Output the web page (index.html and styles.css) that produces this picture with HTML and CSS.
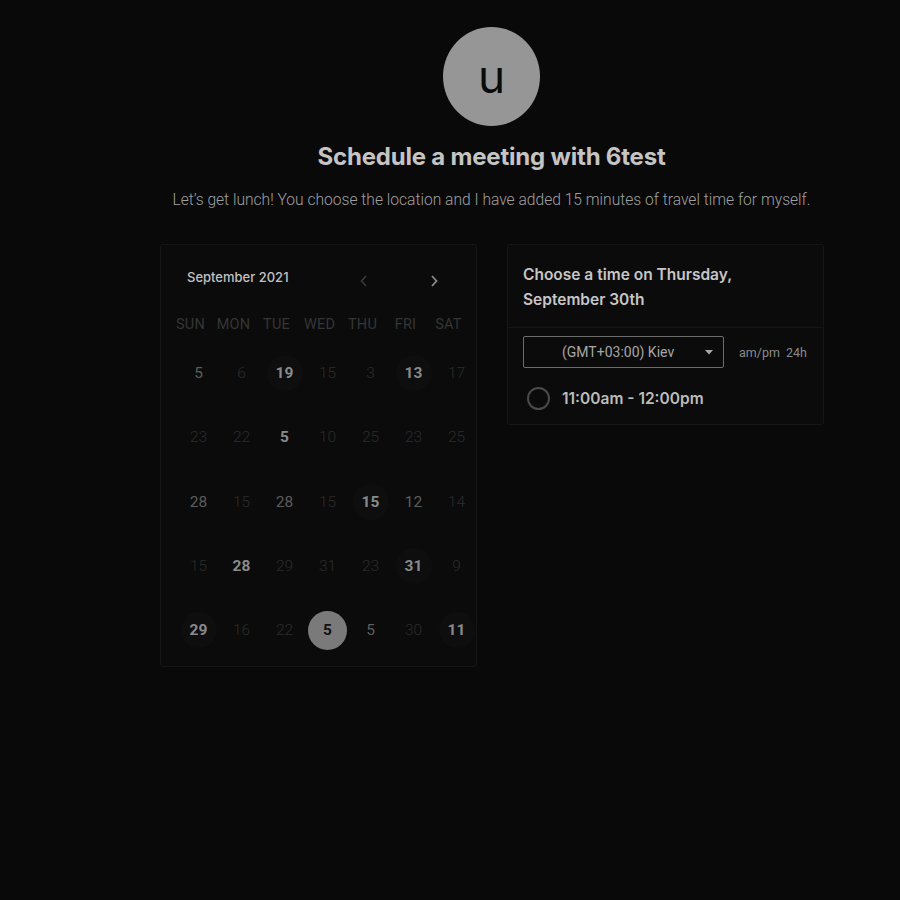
FILE: index.html
```html
<!DOCTYPE html>
<html>
<head>
<meta charset="utf-8">
<link rel="stylesheet" href="styles.css">
</head>
<body>
<div class="page">
  <header class="intro">
    <div class="avatar">u</div>
    <h1 class="title">Schedule a meeting with 6test</h1>
    <p class="subtitle">Let’s get lunch! You choose the location and I have added 15 minutes of travel time for myself.</p>
  </header>
  <div class="cards">
    <section class="card calendar">
      <div class="cal-head">
        <span class="month">September 2021</span>
        <div class="nav">
          <svg width="10" height="14" viewBox="0 0 10 14"><path d="M7 2 L2.5 7 L7 12" fill="none" stroke="#3a3a3a" stroke-width="1.6"/></svg>
          <svg width="10" height="14" viewBox="0 0 10 14"><path d="M3 2 L7.5 7 L3 12" fill="none" stroke="#8a8a8a" stroke-width="1.8"/></svg>
        </div>
      </div>
      <div class="weekdays">
        <span>SUN</span><span>MON</span><span>TUE</span><span>WED</span><span>THU</span><span>FRI</span><span>SAT</span>
      </div>
      <div class="days">
        <span class="d n">5</span><span class="d f">6</span><span class="d b c">19</span><span class="d f">15</span><span class="d f">3</span><span class="d b c">13</span><span class="d f">17</span>
        <span class="d f">23</span><span class="d f">22</span><span class="d b">5</span><span class="d f">10</span><span class="d f">25</span><span class="d f">23</span><span class="d f">25</span>
        <span class="d n">28</span><span class="d f">15</span><span class="d n">28</span><span class="d f">15</span><span class="d b c">15</span><span class="d n">12</span><span class="d f">14</span>
        <span class="d f">15</span><span class="d b">28</span><span class="d f">29</span><span class="d f">31</span><span class="d f">23</span><span class="d b c">31</span><span class="d f">9</span>
        <span class="d b c">29</span><span class="d f">16</span><span class="d f">22</span><span class="d sel">5</span><span class="d n">5</span><span class="d f">30</span><span class="d b c">11</span>
      </div>
    </section>
    <section class="card times">
      <h2 class="times-title">Choose a time on Thursday, September 30th</h2>
      <div class="times-body">
        <div class="tz-row">
          <div class="select">
            <span>(GMT+03:00) Kiev</span>
            <svg class="caret" width="8" height="5" viewBox="0 0 8 5"><path d="M0 0 H8 L4 4.5 Z" fill="#aaa"/></svg>
          </div>
          <div class="fmt"><span>am/pm</span><span>24h</span></div>
        </div>
        <div class="slot">
          <span class="radio"></span>
          <span class="slot-label">11:00am - 12:00pm</span>
        </div>
      </div>
    </section>
  </div>
</div>
</body>
</html>
```
FILE: styles.css
```css
html, body {
  margin: 0;
  padding: 0;
  background: #090909;
  height: 100%;
}
body {
  font-family: Roboto, "Liberation Sans", sans-serif;
}
.page {
  width: 663px;
  margin-left: 160px;
  padding-top: 27px;
}
.intro {
  display: flex;
  flex-direction: column;
  align-items: center;
}
.avatar {
  width: 97px;
  height: 99px;
  border-radius: 50%;
  background: #969696;
  color: #0b0b0b;
  font-family: Inter, sans-serif;
  font-size: 46px;
  font-weight: 400;
  display: flex;
  align-items: center;
  justify-content: center;
  line-height: 1;
  padding-bottom: 2px;
  box-sizing: border-box;
}
.title {
  margin: 17px 0 0;
  font-family: Inter, sans-serif;
  font-size: 24px;
  font-weight: 700;
  color: #c4c4c4;
  line-height: 28px;
  letter-spacing: -0.2px;
}
.subtitle {
  margin: 19px 0 0;
  font-size: 15.6px;
  font-weight: 300;
  color: #a0a0a0;
  line-height: 20px;
  white-space: nowrap;
}
.cards {
  margin-top: 34px;
  display: flex;
  gap: 30px;
  align-items: flex-start;
}
.card {
  width: 317px;
  flex-shrink: 0;
  box-sizing: border-box;
  border: 1px solid #161616;
  border-radius: 3px;
  background: #0b0b0b;
}
.calendar {
  height: 423px;
  padding: 0 0 0 16px;
}
.cal-head {
  height: 63px;
  display: flex;
  align-items: center;
  padding-top: 1px;
  box-sizing: border-box;
}
.month {
  margin-left: 10px;
  font-family: Inter, sans-serif;
  font-size: 13px;
  font-weight: 500;
  color: #c2c2c2;
  width: 172px;
}
.nav {
  display: flex;
  gap: 60px;
  padding-top: 8px;
}
.weekdays {
  display: grid;
  grid-template-columns: repeat(7, 43px);
  margin-left: -8px;
  height: 32px;
  align-items: center;
  font-size: 14.5px;
  color: #353535;
  letter-spacing: 0.2px;
}
.weekdays span {
  text-align: center;
}
.days {
  display: grid;
  grid-template-columns: repeat(7, 43px);
  grid-auto-rows: 64.3px;
  margin-top: 1px;
}
.d {
  display: flex;
  align-items: center;
  justify-content: center;
  font-size: 15.5px;
  justify-self: center;
  align-self: center;
  width: 36px;
  height: 36px;
  border-radius: 50%;
}
.f {
  color: #2c2c2c;
  font-weight: 300;
}
.n {
  color: #5d5d5d;
}
.b {
  color: #8a8a8a;
  font-weight: 700;
}
.c {
  background: #0e0e0e;
}
.sel {
  width: 39px;
  height: 39px;
  background: #7a7a7a;
  color: #121212;
  font-weight: 700;
}
.times-title {
  margin: 0;
  padding: 17px 15px 15px;
  font-family: Inter, sans-serif;
  font-size: 15.5px;
  font-weight: 600;
  line-height: 25px;
  color: #c6c6c6;
  border-bottom: 1px solid #161616;
}
.times-body {
  padding: 8px 15px 14px;
}
.tz-row {
  display: flex;
  align-items: center;
}
.select {
  width: 201px;
  flex-shrink: 0;
  height: 32px;
  box-sizing: border-box;
  border: 1px solid #6c6c6c;
  border-radius: 2px;
  display: flex;
  align-items: center;
  padding-left: 38px;
  padding-right: 10px;
  font-size: 14px;
  color: #a6a6a6;
}
.select span {
  flex: 1;
}
.fmt {
  margin-left: 15px;
  display: flex;
  gap: 6px;
  font-size: 12.5px;
  color: #8a8a8a;
}
.slot {
  display: flex;
  align-items: center;
  margin-top: 19px;
  padding-left: 4px;
}
.radio {
  width: 19px;
  height: 19px;
  border: 2px solid #4a4a4a;
  border-radius: 50%;
}
.slot-label {
  margin-left: 12px;
  font-family: Inter, sans-serif;
  font-size: 15.5px;
  font-weight: 600;
  color: #bcbcbc;
}
```
